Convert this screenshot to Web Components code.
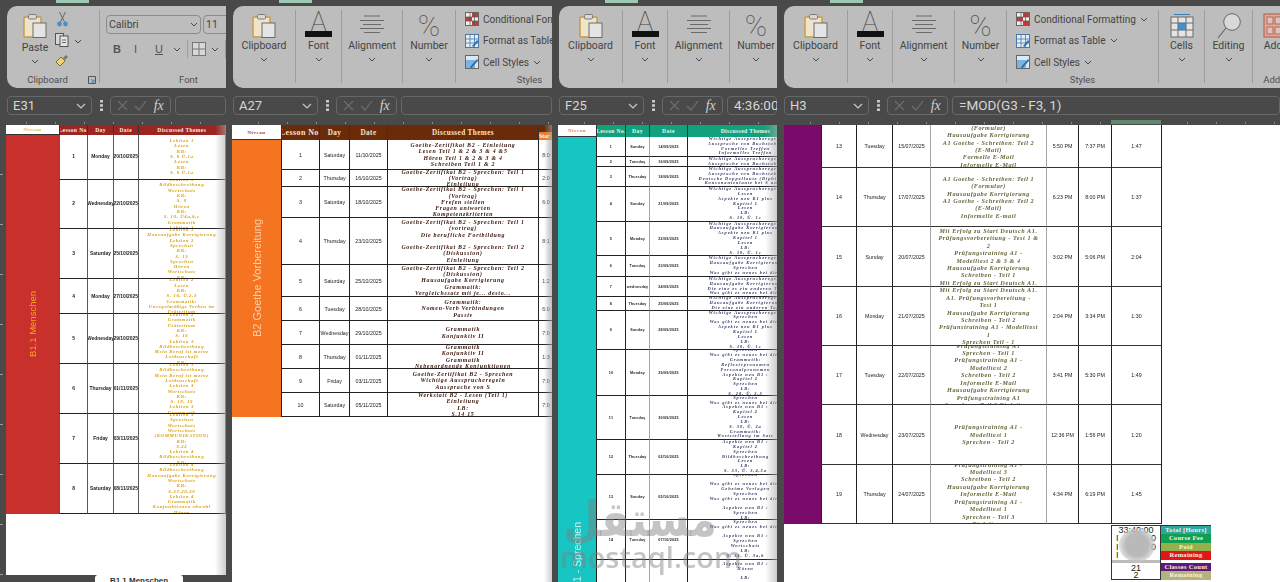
<!DOCTYPE html>
<html lang="de"><head><meta charset="utf-8"><title>Excel</title>
<style>
html,body{margin:0;padding:0;background:#494949;overflow:hidden;width:1280px;height:582px}
</style></head>
<body>
<x-desktop>
 <x-window style="--w:228px;--pl:0px;--mr:2px" tab="56">
  <x-ribbon slot="ribbon" style="margin-left:7px">
   <x-group w="93" label="Clipboard" launcher>
     <x-clip-tools></x-clip-tools>
   </x-group>
   <x-group w="178" label="Font"><x-font-tools></x-font-tools></x-group>
  </x-ribbon>
  <x-namebar slot="namebar" name="E31" style="margin-left:7px"></x-namebar>
  <x-sheet slot="sheet" data="a" style="--fade:11px"></x-sheet>
  <x-tabs slot="tabs"></x-tabs>
 </x-window>
 <x-window style="--w:327px;--pl:4px;--mr:3px" tab="47">
  <x-ribbon slot="ribbon" style="margin-left:1px">
   <x-group w="63"><x-big icon="clip" label="Clipboard"></x-big></x-group>
   <x-group w="46"><x-big icon="font" label="Font"></x-big></x-group>
   <x-group w="61"><x-big icon="align" label="Alignment"></x-big></x-group>
   <x-group w="53"><x-big icon="pct" label="Number"></x-big></x-group>
   <x-group w="148" label="Styles"><x-style-list></x-style-list></x-group>
  </x-ribbon>
  <x-namebar slot="namebar" name="A27" style="margin-left:1px"></x-namebar>
  <x-sheet slot="sheet" data="b" style="--fade:8px"></x-sheet>
 </x-window>
 <x-window style="--w:225px;--pl:3px;--mr:3px" tab="47">
  <x-ribbon slot="ribbon" style="margin-left:1px">
   <x-group w="64"><x-big icon="clip" label="Clipboard"></x-big></x-group>
   <x-group w="45"><x-big icon="font" label="Font"></x-big></x-group>
   <x-group w="62"><x-big icon="align" label="Alignment"></x-big></x-group>
   <x-group w="52" last><x-big icon="pct" label="Number"></x-big></x-group>
  </x-ribbon>
  <x-namebar slot="namebar" name="F25" formula="4:36:00 PM" style="margin-left:1px"></x-namebar>
  <x-sheet slot="sheet" data="c" style="--fade:12px"></x-sheet>
 </x-window>
 <x-window style="--w:500px;--pl:4px;--mr:0px" tab="46">
  <x-ribbon slot="ribbon">
   <x-group w="64"><x-big icon="clip" label="Clipboard"></x-big></x-group>
   <x-group w="45"><x-big icon="font" label="Font"></x-big></x-group>
   <x-group w="62"><x-big icon="align" label="Alignment"></x-big></x-group>
   <x-group w="52"><x-big icon="pct" label="Number"></x-big></x-group>
   <x-group w="152" label="Styles"><x-style-list></x-style-list></x-group>
   <x-group w="46"><x-big icon="cells" label="Cells"></x-big></x-group>
   <x-group w="48"><x-big icon="search" label="Editing"></x-big></x-group>
   <x-group w="40" label="Add-" last><x-big icon="addin" label="Add" nochev></x-big></x-group>
  </x-ribbon>
  <x-namebar slot="namebar" name="H3" formula="=MOD(G3 - F3, 1)"></x-namebar>
  <x-sheet slot="sheet" data="d"><x-summary></x-summary></x-sheet>
 </x-window>
 <x-watermark></x-watermark>
</x-desktop>

<script>
const CHEV=`<svg width="8" height="5" viewBox="0 0 8 5"><polyline points="1,1 4,4 7,1" fill="none" stroke="#4a4a4a" stroke-width="1"/></svg>`;
const ICONS={
 clip:`<svg width="26" height="25" viewBox="0 0 26 25"><rect x="2" y="4" width="17" height="20" rx="1" fill="#efe4c9" stroke="#c59a45" stroke-width="1.4"/><rect x="6.5" y="1.5" width="8" height="4.5" rx="1.2" fill="#d9d9d9" stroke="#7a7a7a"/><rect x="11" y="10" width="13" height="14.5" fill="#e4e4e4" stroke="#6a6a6a"/></svg>`,
 cut:`<svg width="13" height="15" viewBox="0 0 13 15"><path d="M3.500 0l5 10M9.500 0l-5 10" stroke="#666" fill="none"/><circle cx="3.500" cy="12" r="2.400" fill="#4a8fc8"/><circle cx="9.500" cy="12" r="2.400" fill="#4a8fc8"/></svg>`,
 copy:`<svg width="14" height="14" viewBox="0 0 14 14"><rect x=".5" y=".5" width="8" height="11" fill="#d8d8d8" stroke="#555"/><rect x="5" y="3" width="8" height="10.5" fill="#e6e6e6" stroke="#555"/><path d="M7 7h4M7 9.5h4" stroke="#666"/></svg>`,
 paint:`<svg width="14" height="14" viewBox="0 0 14 14"><path d="M1 9l5-5 4 4-5 5z" fill="#efd27a" stroke="#8a6a20"/><path d="M8 5l3-3 2 2-3 3z" fill="#777"/></svg>`,
 launcher:`<svg width="8" height="8" viewBox="0 0 8 8"><path d="M.5.5h7v7h-7z" fill="none" stroke="#555"/><path d="M3 3l3 3M6 3.5V6H3.5" stroke="#4a7fb0" fill="none"/></svg>`,
 align:`<svg width="26" height="22" viewBox="0 0 26 22"><path d="M5 3h16M1 7.500h24M4 11.500h18M1 15.500h24M5 19.500h16" stroke="#6a6a6a" stroke-width="1.1" fill="none"/></svg>`,
 cf:`<svg width="14" height="14" viewBox="0 0 14 14"><rect x=".5" y=".5" width="13" height="13" fill="#eee" stroke="#666"/><rect x="1" y="5" width="6" height="4" fill="#c83a3a"/><rect x="7" y="1" width="6" height="4" fill="#c83a3a"/><rect x="7" y="9" width="6" height="4" fill="#c83a3a"/><path d="M5 1v12M9.500 1v12M1 5h12M1 9h12" stroke="#555" stroke-width=".7"/></svg>`,
 ft:`<svg width="14" height="14" viewBox="0 0 14 14"><rect x=".5" y=".5" width="13" height="13" fill="#e4eef7" stroke="#4a78a8"/><path d="M5 1v12M9.500 1v12M1 5h12M1 9h12" stroke="#4a78a8" stroke-width=".8"/><path d="M7 12l5-6 1.500 1.500-5 5.500z" fill="#2e70b0"/></svg>`,
 cs:`<svg width="14" height="14" viewBox="0 0 14 14"><rect x=".5" y=".5" width="13" height="13" fill="#dce8f2" stroke="#666"/><rect x="1" y="5" width="9" height="8" fill="#7db3de"/><path d="M5 12l7-8 1.200 1.500-7 8z" fill="#2c6ea8"/></svg>`,
 cells:`<svg width="26" height="25" viewBox="0 0 26 25"><path d="M5 1.500h16" stroke="#3b7db5" stroke-width="1"/><rect x="2" y="4" width="22" height="20" fill="#e4e4e4" stroke="#6a6a6a"/><rect x="9" y="10" width="8" height="7" fill="#3b93da"/><path d="M9 4v20M17 4v20M2 10h22M2 17h22" stroke="#6a6a6a"/></svg>`,
 search:`<svg width="26" height="27" viewBox="0 0 26 27"><circle cx="16" cy="9" r="8.300" fill="#d9d9d9" stroke="#666" stroke-width="1"/><path d="M10 15L2 25" stroke="#666" stroke-width="1.200"/></svg>`,
 addin:`<svg width="26" height="25" viewBox="0 0 26 25"><rect x="4" y="1" width="20" height="23" fill="#cdb0a6" stroke="#c4624a" stroke-width="1.200"/><rect x="7" y="4" width="6" height="7" fill="#d9c4bc" stroke="#c4624a"/><rect x="15" y="4" width="6" height="7" fill="#d9c4bc" stroke="#c4624a"/><rect x="7" y="14" width="6" height="7" fill="#d9c4bc" stroke="#c4624a"/><rect x="15" y="14" width="6" height="7" fill="#d9c4bc" stroke="#c4624a"/></svg>`,
 borders:`<svg width="14" height="14" viewBox="0 0 14 14"><rect x=".5" y=".5" width="13" height="13" fill="#d8d8d8" stroke="#777"/><path d="M7 1v12M1 7h12" stroke="#777"/></svg>`
};
const UI="Roboto,'Noto Sans',sans-serif";

function def(name,css,html,extra){
 customElements.define(name,class extends HTMLElement{
  connectedCallback(){
   if(this.shadowRoot)return;
   const s=this.attachShadow({mode:'open'});
   s.innerHTML=`<style>${css}</style>`+(typeof html==='function'?html(this):html);
   if(extra)extra(this,s);
  }
 });
}

def('x-desktop',`:host{display:flex;width:1280px;height:582px;position:relative;overflow:hidden;font-family:${UI}}`,`<slot></slot>`);

def('x-window',`:host{display:flex;flex-direction:column;flex:none;box-sizing:border-box;width:var(--w);height:582px;padding-left:var(--pl);padding-right:var(--mr);overflow:hidden}
 .top{height:6px;flex:none}
 .ind{height:3px;width:33px;background:#9ec9b2}
 ::slotted([slot=ribbon]){flex:none}
 ::slotted([slot=namebar]){flex:none;margin-top:8px}
 ::slotted([slot=sheet]){flex:1;min-height:0}`,
 w=>`<div class="top"><div class="ind" style="margin-left:${w.getAttribute('tab')}px"></div></div>
 <slot name="ribbon"></slot><slot name="namebar"></slot><slot name="sheet"></slot><slot name="tabs"></slot>`);

def('x-ribbon',`:host{display:flex;height:82px;box-sizing:border-box;padding:4px 0 5px;background:#bdbdbd;border-radius:10px 0 0 10px;overflow:hidden;color:#404040}`,`<slot></slot>`);

def('x-group',`:host{display:flex;flex-direction:column;flex:none;box-sizing:border-box;position:relative;border-right:1px solid #9d9d9d;height:73px}
 :host([last]){border-right:0}
 .body{flex:1;min-height:0;display:flex;flex-direction:column}
 .lab{height:14px;line-height:14px;font-size:9.500px;text-align:center;color:#505050;display:flex;align-items:center;justify-content:center;margin-bottom:-4px}
 .lab span{flex:1}
 .lab svg{margin:0 3px 0 0}`,
 g=>`<div class="body"><slot></slot></div>`+(g.hasAttribute('label')?`<div class="lab"><span>${g.getAttribute('label')}</span>${g.hasAttribute('launcher')?ICONS.launcher:''}</div>`:''),
 g=>{g.style.width=g.getAttribute('w')+'px';});

def('x-big',`:host{display:flex;flex-direction:column;align-items:center;padding-top:3px;font-size:10.500px;color:#444;line-height:14px}
 .ic{height:25px;display:flex;align-items:flex-start;justify-content:center;position:relative;width:100%}
 .lb{margin-top:1px;white-space:nowrap}
 .ch{height:10px;display:flex;align-items:center;margin-top:1px}
 .f{display:flex;flex-direction:column;align-items:center;width:27px;font:100 27px/18px Roboto,"Liberation Sans",sans-serif;color:#444}
 .f i{display:block;width:27px;height:6px;background:#111;margin-top:0}
 .p{font:100 30px/25px Roboto,"Liberation Sans",sans-serif;color:#555}`,
 b=>{const n=b.getAttribute('icon');
  const ic=n==='font'?`<div class="f">A<i></i></div>`:n==='pct'?`<div class="p">%</div>`:ICONS[n];
  return `<div class="ic">${ic}</div><div class="lb">${b.getAttribute('label')}</div>${b.hasAttribute('nochev')?'':`<div class="ch">${CHEV}</div>`}`;});

def('x-clip-tools',`:host{display:flex;padding-left:13px;font-size:10.500px;color:#444;line-height:14px}
 .p{width:30px;display:flex;flex-direction:column;align-items:center;padding-top:3px}
 .p .l{margin-top:3px}.p .c{height:9px;display:flex;align-items:center;margin-top:2px}
 .t{display:flex;flex-direction:column;align-items:center;width:16px;margin-left:4px;padding-top:2px;gap:6px}
 .e{margin:29px 0 0 4px;height:8px;display:flex}`,
 `<div class="p">${ICONS.clip}<div class="l">Paste</div><div class="c">${CHEV}</div></div>
 <div class="t">${ICONS.cut}${ICONS.copy}${ICONS.paint}</div><div class="e">${CHEV}</div>`);

def('x-font-tools',`:host{display:flex;flex-direction:column;padding:5px 0 0 6px;font-size:10.500px;color:#444}
 .r1{display:flex;gap:2px}
 .box{height:19px;border:1px solid #8b8b8b;border-radius:4px;box-sizing:border-box;display:flex;align-items:center;padding:0 2px;justify-content:space-between}
 .r2{display:flex;align-items:center;margin-top:7px;height:16px;padding-left:7px}
 .r2 b,.r2 i,.r2 u{font:11px "Liberation Sans",sans-serif;width:21px;color:#555;text-align:left}
 .r2 b{font-weight:700}
 .s{width:1px;height:18px;background:#9d9d9d;margin:0 6px}
 .y{width:6px;height:10px;background:#d8c84a;margin-left:0}`,
 `<div class="r1"><div class="box" style="width:95px">Calibri${CHEV}</div><div class="box" style="width:36px">11</div></div>
 <div class="r2"><b>B</b><i>I</i><u>U</u><span style="margin-left:-3px;display:flex">${CHEV}</span><span class="s" style="margin-right:4px"></span>${ICONS.borders}<span style="margin-left:5px;display:flex">${CHEV}</span><span class="s"></span><span class="y"></span></div>`);

def('x-style-list',`:host{display:flex;flex-direction:column;padding:1px 0 0 9px;font-size:10px;color:#444;gap:5px;white-space:nowrap}
 .r{display:flex;align-items:center;gap:4px;height:16.500px}
 .c{display:flex;margin-left:0}`,
 ()=>[['cf','Conditional Formatting'],['ft','Format as Table'],['cs','Cell Styles']].map(([i,t])=>`<div class="r">${ICONS[i]}<span>${t}</span><span class="c">${CHEV}</span></div>`).join(''));

def('x-namebar',`:host{display:flex;align-items:stretch;height:19px;color:#d6d6d6;font-size:13px;line-height:17px;overflow:hidden;margin-bottom:5px}
 .b{box-sizing:border-box;border:1px solid #676767;border-radius:4px;display:flex;align-items:center}
 .n{width:85px;flex:none;padding:0 5px;justify-content:space-between}
 .d{width:18px;flex:none;display:flex;align-items:center;justify-content:center}
 .x{width:61px;flex:none;justify-content:space-around;padding:0 3px}
 .f{flex:1;margin-left:4px;padding:0 6px;white-space:nowrap;font-size:13.500px;min-width:0}
 .x em{font:italic 14px "Liberation Serif",serif;color:#d0d0d0}
 `,
 n=>`<div class="b n"><span>${n.getAttribute('name')}</span><svg width="10" height="6" viewBox="0 0 10 6"><polyline points="1,1 5,5 9,1" fill="none" stroke="#c9c9c9" stroke-width="1.200"/></svg></div>
 <div class="d"><svg width="3" height="11" viewBox="0 0 3 11"><rect width="3" height="2.500" fill="#c9c9c9"/><rect y="4.200" width="3" height="2.500" fill="#c9c9c9"/><rect y="8.500" width="3" height="2.500" fill="#c9c9c9"/></svg></div>
 <div class="b x"><svg width="11" height="11" viewBox="0 0 11 11"><path d="M1 1l9 9M10 1l-9 9" stroke="#6d6d6d" stroke-width="1.200"/></svg><svg width="13" height="11" viewBox="0 0 13 11"><path d="M1 6l4 4 7-9" stroke="#6d6d6d" stroke-width="1.200" fill="none"/></svg><em>fx</em></div>
 <div class="b f">${n.getAttribute('formula')||''}</div>`);

const SANS="'Liberation Sans',sans-serif";
const SHEETS={
 a:{pad:6,rb:1,sideColor:'#c8302c',sideText:'B1.1 Menschen',sideFg:'#f8a31e',sideFs:9.5,side:53,niv:'#e8b838',hh:10,head:'#9b2523',headFg:'#f6ece0',headFs:[5.6,5.5],
  cols:[28,26,24.5,87.5],labels:['Lesson No.','Day','Date','Discussed Themes'],
  border:'#5a5a5a',rowLine:'#222',fg:'#d9a010',fs:4.8,ls:.62,lh:5.33,
  font:`bold 4.9px ${SANS}`,
  rows:[[44.5,'1','Monday','20/10/2025',['Lektion 1','Lesen','KB:','S. 8 Ü.1a','Lesen','KB:','S. 8 Ü.1a']],
  [49.5,'2','Wednesday','22/10/2025',['Lektion 1','Bildbeschreibung','Wortschatz','KB:','S. 9','Hören','KB:','S. 10, Ü4a,b,c','Grammatik','Lektion 1']],
  [50,'3','Saturday','25/10/2025',['Lektion 1','Hausaufgabe Korrigierung','Lektion 2','Sprechen','KB:','S. 13','Sprechen','Hören','Wortschatz','KB:']],
  [35,'4','Monday','27/10/2025',['Lektion 2','Lesen','KB:','S. 16, Ü.2,3','Grammatik:','Unregelmäßige Verben im','Präteritum']],
  [50,'5','Wednesday','29/10/2025',['Lektion 2','Grammatik','Präteritum','KB:','S. 16','Lektion 3','Bildbeschreibung','Mein Beruf ist meine','Leidenschaft','KB:']],
  [50,'6','Thursday','01/11/2025',['Lektion 3','Bildbeschreibung','Mein Beruf ist meine','Leidenschaft','Lektion 3','Wortschatz','KB:','S. 18, 19','Lektion 3','Grammatik']],
  [50,'7','Friday','03/11/2025',['Lektion 3','Sprechen','Wortschatz','Wortschatz','(KOMMUNIKATION)','KB:','S.22','Lektion 4','Bildbeschreibung','KB:']],
  [50,'8','Saturday','08/11/2025',['Lektion 4','Bildbeschreibung','Hausaufgabe Korrigierung','Wortschatz','KB:','S.27,28,29','Lektion 4','Grammatik','Konjunktionen obwohl','Hören']]]},
 b:{pad:0,sideColor:'#f47421',sideText:'B2 Goethe Vorbereitung',sideFg:'#fbd0ad',sideFs:11,side:49,niv:'#a93a2a',hh:15,head:'#6b2b08',headFg:'#f3e3d2',headFs:[8,7.2],
  cols:[38,30,38,151,15],labels:['Lesson No.','Day','Date','Discussed Themes',''],star:true,
  border:'#222',rowLine:'#222',fg:'#3a1408',fs:5.9,ls:.72,lh:6.3,
  font:`5.3px ${SANS}`,
  rows:[[30,'1','Saturday','11/10/2025',['Goethe-Zertifikat B2 - Einleitung','Lesen Teil 1 & 2 & 3 & 4 &5','Hören Teil 1 & 2 & 3 & 4','Schreiben Teil 1 & 2'],'8:0'],
  [17,'2','Thursday','16/10/2025',['Goethe-Zertifikat B2 - Sprechen: Teil 1','(Vortrag)','Einleitung'],'2:0'],
  [31,'3','Saturday','18/10/2025',['Goethe-Zertifikat B2 - Sprechen: Teil 1','(Vortrag)','Frefen stellen','Fragen antworten','Kompetenzkriterien'],'6:0'],
  [47,'4','Thursday','23/10/2025',['Goethe-Zertifikat B2 - Sprechen: Teil 1','(vortrag)','Die berufliche Fortbildung','','Goethe-Zertifikat B2 - Sprechen: Teil 2','(Diskussion)','Einleitung'],'8:1'],
  [32,'5','Saturday','25/10/2025',['Goethe-Zertifikat B2 - Sprechen: Teil 2','(Diskussion)','Hausaufgabe Korrigierung','Grammatik:','Vergleichssatz mit je... desto...'],'1:2'],
  [24,'6','Tuesday','28/10/2025',['Grammatik:','Nomen-Verb Verbindungen','Passiv'],'6:0'],
  [24,'7','Wednesday','29/10/2025',['Grammatik','Konjunktiv II'],'7:0'],
  [24,'8','Thursday','01/11/2025',['Grammatik','Konjunktiv II','Grammatik','Nebenordnende Konjunktionen'],'1:3'],
  [24,'9','Friday','03/11/2025',['Goethe-Zertifikat B2 - Sprechen','Wichtige Aussprucheregeln','Aussprache von S'],'7:0'],
  [24,'10','Saturday','05/11/2025',['Werkstatt B2 - Lesen (Teil 1)','Einleitung','LB:','S.14 15'],'7:0']]},
 c:{pad:0,sideColor:'#17c6c3',sideText:'B1 - Sprechen',sideFg:'#c9f1ee',sideFs:10.5,sideEnd:true,side:38,niv:'#d8806a',hh:12,head:'#11a17c',headFg:'#eaf6ef',headFs:[5.5,5.6],
  cols:[29,24,38,116],labels:['Lesson No.','Day','Date','Discussed Themes'],grayCols:[2],
  border:'#222',rowLine:'#222',fg:'#2e3560',fs:4.4,ls:.95,lh:4.85,
  font:`bold 3.7px ${SANS}`,letter:.2,
  rows:[[20,'1','Sunday','14/09/2025',['Wichtige Aussprucheregeln','Aussprache von Buchstaben','Formelles Treffen','Informelles Treffen']],
  [10,'2','Tuesday','16/09/2025',['Wichtige Aussprucheregeln','Aussprache von Buchstaben']],
  [20,'3','Thursday','18/09/2025',['Wichtige Aussprucheregeln','Aussprache von Buchstaben','Deutsche Doppellaute (Diphthong)','Konsonantenlaute bei S und Z']],
  [35,'4','Sunday','21/09/2025',['Wichtige Aussprucheregeln','Lesen','Aspekte neu B1 plus','Kapitel 1','Lesen','LB:','S. 10, Ü. 1c']],
  [34,'5','Monday','22/09/2025',['Wichtige Aussprucheregeln','Hausaufgabe Korrigierung','Aspekte neu B1 plus','Kapitel 1','Lesen','LB:','S. 10, Ü. 1c']],
  [21,'6','Tuesday','23/09/2025',['Wichtige Aussprucheregeln','Hausaufgabe Korrigierung','Sprechen','Was gibt es neues bei dir?']],
  [20,'7','wednesday','24/09/2025',['Wichtige Aussprucheregeln','Hausaufgabe Korrigierung','Die eine es ein anderen Tag','Was gibt es neues bei dir?']],
  [14,'8','Thursday','25/09/2025',['Wichtige Aussprucheregeln','Hausaufgabe Korrigierung','Die eine ein anderen Tag']],
  [39,'9','Sunday','28/09/2025',['Wichtige Aussprucheregeln','Sprechen','Was gibt es neues bei dir?','Aspekte neu B1 plus','Kapitel 1','Lesen','LB:','S. 10, Ü. 1c']],
  [46,'10','Monday','29/09/2025',['Sprechen','Was gibt es neues bei dir?','Grammatik:','Reflexivpronomen','Personalpronomen','Aspekte neu B1 :','Kapitel 2','Sprechen','LB:','S. 28, Ü. 2,3']],
  [44,'11','Tuesday','30/09/2025',['Sprechen','Was gibt es neues bei dir?','Aspekte neu B1 :','Kapitel 2','Lesen','LB:','S. 30, Ü. 2a','Grammatik:','Wortstellung im Satz']],
  [35,'12','Thursday','02/10/2025',['Aspekte neu B1 :','Kapitel 2','Sprechen','Bildbeschreibung','Lesen','LB:','S. 33, Ü. 3,4,5a']],
  [45,'13','Sunday','05/10/2025',['Sprechen','','Was gibt es neues bei dir?','Geheime Vorlagen','Sprechen','Was gibt es neues bei dir?','','Aspekte neu B1 :','Sprechen','LB:']],
  [40,'14','Tuesday','07/10/2025',['Sprechen','Was gibt es neues bei dir?','','Aspekte neu B1 :','Sprechen','Wortschatz','LB:','S. 34, Ü. 3a,b']],
  [24,'','','',['Aspekte neu B1 :','Hören','','LB:']]]},
 d:{pad:0,rb:1,hl:327,sideColor:'#7a0a6c',side:37,hh:0,cols:[35,36,38,116,32,33,50],grayCols:[3,4],
  border:'#222',rowLine:'#333',fg:'#66643a',fs:6.2,ls:.55,lh:7.4,
  font:`5.3px ${SANS}`,
  rows:[[43,'13','Tuesday','15/07/2025',['(Formular)','Hausaufgabe Korrigierung','A1 Goethe - Schreiben: Teil 2','(E-Mail)','Formelle E-Mail','Informelle E-Mail'],'5:50 PM','7:37 PM','1:47'],
  [59,'14','Thursday','17/07/2025',['A1 Goethe - Schreiben: Teil 1','(Formular)','Hausaufgabe Korrigierung','A1 Goethe - Schreiben: Teil 2','(E-Mail)','Informelle E-mail'],'6:23 PM','8:00 PM','1:37'],
  [60,'15','Sunday','20/07/2025',['Mit Erfolg zu Start Deutsch A1.','Prüfungsvorbereitung - Test 1 &','2','Prüfungstraining A1 -','Modelltest 2 & 3 & 4','Hausaufgabe Korrigierung','Schreiben - Teil 1','Mit Erfolg zu Start Deutsch A1.'],'3:02 PM','5:06 PM','2:04'],
  [59,'16','Monday','21/07/2025',['Mit Erfolg zu Start Deutsch A1.','A1. Prüfungsvorbereitung -','Test 1','Hausaufgabe Korrigierung','Schreiben - Teil 2','Prüfunstraining A1 - Modelltest','1','Sprechen Teil - 1'],'2:04 PM','3:34 PM','1:30'],
  [59,'17','Tuesday','22/07/2025',['Prüfungstraining A1','Sprechen - Teil 1','Prüfungstraining A1 -','Modelltest 2','Schreiben - Teil 2','Informelle E-Mail','Hausaufgabe Korrigierung','Prüfungstraining A1','Sprechen - Teil 2 Einleitung'],'3:41 PM','5:30 PM','1:49'],
  [60,'18','Wednesday','23/07/2025',['Prüfungstraining A1 -','Modelltest 1','Sprechen - Teil 2'],'12:36 PM','1:56 PM','1:20'],
  [59,'19','Thursday','24/07/2025',['Prüfungstraining A1 -','Modelltest 3','Schreiben - Teil 2','Hausaufgabe Korrigierung','Informelle E-Mail','Prüfungstraining A1 -','Modelltest 1','Sprechen - Teil 3','Einleitung'],'4:34 PM','6:19 PM','1:45']]}
};

def('x-sheet',`:host{display:flex;flex-direction:column;position:relative;overflow:hidden;background:#494949}
 .ruler{height:5px;flex:none;position:relative;background:repeating-linear-gradient(90deg,#494949 0 26px,#8a8a8a 26px 27px,#494949 27px 29px);background-size:100% 2px;background-repeat:no-repeat;background-position:0 2px}
 .hl{height:4px;width:50px;background:#5f8a6e}
 .main{flex:1;min-height:0;display:flex;position:relative}
 .rl{flex:none;background:repeating-linear-gradient(180deg,#494949 0 49px,#9a9a9a 49px 50px);background-size:3px 100%;background-repeat:no-repeat}
 .pg{flex:1;min-width:0;background:#fff;overflow:hidden;position:relative;display:flex;flex-direction:column}
 .fade{position:absolute;top:0;bottom:0;right:0;width:var(--fade,0);background:linear-gradient(90deg,rgba(190,190,190,0),rgba(170,170,170,.6))}
 .g{display:grid;flex:none;width:max-content;filter:blur(.2px)}
 .g>div{box-sizing:border-box;overflow:hidden;display:flex;align-items:center;justify-content:center;text-align:center;white-space:nowrap}
 .niv{background:#fff;font:bold 5px "Liberation Serif",serif;letter-spacing:.5px;border-bottom:1.5px solid #333}
 .hd{font-family:"Liberation Serif",serif;font-weight:700;letter-spacing:.4px;border-left:1px solid #333}
 .g>.hd.star{display:block;background:linear-gradient(#6b2b08 0 7px,#ef7d22 7px);color:#fff;padding-top:8px;font-size:6px;text-align:left;letter-spacing:0;line-height:7px}
 .side{position:relative}
 .side span{writing-mode:vertical-rl;transform:rotate(180deg);white-space:nowrap}
 .cell{border-left:1px solid var(--b);border-bottom:1px solid var(--r);color:#222}
 .g>.th{flex-direction:column;font-family:"Liberation Serif",serif;font-weight:700;font-style:italic;justify-content:center}
 .th div{flex:none;min-height:1em}
 .g>.gc{border-left:1.5px solid #a5a5a5}
 .gray{color:#444;background:linear-gradient(90deg,#fff 0 40%,#ddd)}
 `,
 s=>{
  const d=SHEETS[s.getAttribute('data')];
  const cols=[d.side,...d.cols];
  const rows=(d.hh?[d.hh]:[]).concat(d.rows.map(r=>r[0]));
  let h='';
  if(d.hh){
    h+=`<div class="niv" style="color:${d.niv}">Niveau</div>`;
    d.cols.forEach((c,i)=>{
      const st=d.star&&i===d.cols.length-1;
      const fs=d.headFs[i===0?0:1];
      h+=`<div class="hd${st?' star':''}" style="${st?'':`background:${d.head};color:${d.headFg};font-size:${fs}px`}">${st?'Star':d.labels[i]}</div>`;
    });
  }
  const ss=d.sideEnd?'align-items:flex-end;':'';
  h+=`<div class="side" style="background:${d.sideColor};color:${d.sideFg||'#fff'};grid-row:${d.hh?2:1}/span ${d.rows.length};font:${d.sideFs||9}px ${SANS};${ss}">${d.sideText?`<span style="${d.sideEnd?'margin-bottom:-5px':''}">${d.sideText}</span>`:''}</div>`;
  const gray=d.grayCols||[];
  d.rows.forEach(r=>{
    r.slice(1).forEach((v,i)=>{
      if(Array.isArray(v)){
        h+=`<div class="cell th${gray.includes(i)?' gc':''}" style="color:${d.fg};font-size:${d.fs}px;letter-spacing:${d.ls}px;line-height:${d.lh}px">${v.map(t=>`<div>${t}</div>`).join('')}</div>`;
      } else {
        const g=d.star&&i===4;
        h+=`<div class="cell${gray.includes(i)?' gc':''}${g?' gray':''}" style="font:${d.font};letter-spacing:${d.letter||0}px">${v}</div>`;
      }
    });
  });
  return `<div class="ruler">${d.hl?`<div class="hl" style="margin-left:${d.hl}px"></div>`:''}</div><div class="main"><div class="rl" style="width:${d.pad}px"></div><div class="pg" style="--b:${d.border};--r:${d.rowLine}">
   <div class="g" style="${d.rb?`border-right:1px solid ${d.border};`:''}grid-template-columns:${cols.map(c=>c+'px').join(' ')};grid-template-rows:${rows.map(c=>c+'px').join(' ')}">${h}</div>
   <slot></slot><div class="fade"></div></div></div>`;
 });

def('x-summary',`:host{display:block;margin-left:327px;width:100px;font:9px "Liberation Sans",sans-serif;color:#222;position:relative;margin-top:.5px}
 .r{display:grid;grid-template-columns:50px 50px;height:8.600px;line-height:8.600px}
 .v{box-sizing:border-box;border:1px solid #333;border-width:0 1px 1px 1px;display:flex;justify-content:center;align-items:center;background:#fff}
 .v.sp{justify-content:space-between;padding:0 4px}
 .l{font:bold 6.500px "Liberation Serif",serif;color:#f2f2e8;text-align:center;letter-spacing:.3px;overflow:hidden;white-space:nowrap}
 .blur{position:absolute;left:8px;top:3px;width:36px;height:34px;border-radius:50%;background:radial-gradient(circle,#b9b9b9 0 45%,rgba(200,200,200,.6) 70%,rgba(220,220,220,0) 100%)}`,
 `<div class="r" style="border-top:1px solid #333;"><div class="v">33:40:00</div><div class="l" style="background:#2ea69e">Total [Hours]</div></div>
 <div class="r"><div class="v sp"><span>I</span><span>0</span></div><div class="l" style="background:#0f9e52">Course Fee</div></div>
 <div class="r"><div class="v sp"><span>I</span><span>0</span></div><div class="l" style="background:#94b04a">Paid</div></div>
 <div class="r"><div class="v sp"><span>I</span><span></span></div><div class="l" style="background:#e2161a">Remaining</div></div>
 <div class="r" style="height:11px;line-height:11px"><div class="v" style="background:linear-gradient(#bdbdbd 0 3px,#fff 3px);padding-top:3px">21</div><div class="l" style="background:linear-gradient(#fff 0 3px,#5a1a78 3px);padding-top:3px;height:8px;line-height:8px">Classes Count</div></div>
 <div class="r"><div class="v">2</div><div class="l" style="background:#b5b27c">Remaining</div></div>
 <div class="blur"></div>`);

def('x-tabs',`:host{display:flex;height:7px;flex:none;background:#494949;overflow:hidden}
 .t{margin-left:95px;width:88px;background:#fff;border-radius:3px 3px 0 0;font:bold 8px "Liberation Sans",sans-serif;color:#333;text-align:center;line-height:11px}`,
 `<div class="t">B1.1 Menschen</div>`);

def('x-watermark',`:host{position:absolute;left:560px;top:490px;width:160px;height:92px;pointer-events:none;color:rgba(125,125,125,.45);text-align:center}
 .ar{font:bold 42px/60px "DejaVu Sans",sans-serif;direction:rtl;height:58px;transform:scaleY(1.15)}
 .en{font:600 29px/26px "Open Sans",sans-serif;margin-top:-4px;white-space:nowrap}`,
 `<div class="ar">مستقل</div><div class="en">mostaql.com</div>`);
</script>
</body></html>
